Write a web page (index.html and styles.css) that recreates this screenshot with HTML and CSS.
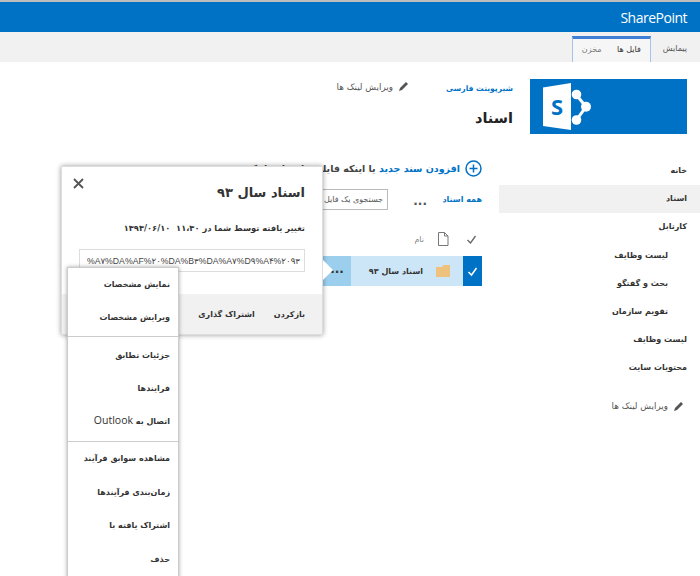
FILE: index.html
```html
<!DOCTYPE html>
<html lang="fa" dir="rtl">
<head>
<meta charset="utf-8">
<title>اسناد</title>
<link rel="stylesheet" href="styles.css">
</head>
<body>
<div class="suite"><span class="brand" dir="ltr">SharePoint</span></div>
<div class="ribbon">
  <span class="rib-link">پیمایش</span>
  <div class="rib-tab"><span class="rib-active">فایل ها</span><span class="rib-link">مخزن</span></div>
</div>
<header class="head">
  <svg class="logo" width="157" height="55" viewBox="0 0 157 55">
    <rect width="157" height="55" fill="#0072c6"/>
    <path d="M13 8.500 41 4V51L13 47Z" fill="#fff"/>
    <text x="21" y="36" class="logo-s">S</text>
    <path d="M46.500 16 56 27.700 46.500 41" fill="none" stroke="#fff" stroke-width="3"/>
    <circle cx="46.500" cy="15.500" r="4.800" fill="#fff"/>
    <circle cx="56" cy="27.700" r="5" fill="#fff"/>
    <circle cx="46.500" cy="41" r="4.800" fill="#fff"/>
  </svg>
  <div class="titles">
    <a class="site">شیرپوینت فارسی</a>
    <h1 class="title">اسناد</h1>
  </div>
  <div class="edit head-edit">
    <svg class="pencil" width="11" height="11" viewBox="0 0 11 11"><path d="M8 1l2 2-6 6-3 1 1-3z" fill="#555"/></svg>
    <span>ویرایش لینک ها</span>
  </div>
</header>
<div class="main">
  <aside class="side">
    <nav class="nav">
      <a class="nav-item">خانه</a>
      <a class="nav-item current">اسناد</a>
      <a class="nav-item">کارتابل</a>
      <a class="nav-item sub">لیست وظایف</a>
      <a class="nav-item sub">بحث و گفتگو</a>
      <a class="nav-item sub">تقویم سازمان</a>
      <a class="nav-item">لیست وظایف</a>
      <a class="nav-item">محتویات سایت</a>
    </nav>
    <div class="edit side-edit">
      <svg class="pencil" width="11" height="11" viewBox="0 0 11 11"><path d="M8 1l2 2-6 6-3 1 1-3z" fill="#555"/></svg>
      <span>ویرایش لینک ها</span>
    </div>
  </aside>
  <section class="content">
    <div class="add">
      <svg width="17" height="17" viewBox="0 0 17 17"><circle cx="8.500" cy="8.500" r="7.500" fill="none" stroke="#0072c6" stroke-width="1.500"/><path d="M8.500 4.500v8M4.500 8.500h8" stroke="#0072c6" stroke-width="1.500"/></svg>
      <span class="add-text"><b class="blue">افزودن سند جدید</b> یا اینکه فایلی را به اینجا بکشید</span>
    </div>
    <div class="views">
      <a class="view">همه اسناد</a>
      <span class="more">...</span>
      <span class="search">جستجوی یک فایل</span>
    </div>
    <div class="cols">
      <svg class="col-check" width="11" height="11" viewBox="0 0 11 11"><path d="M1.500 6l3 3 5-7" fill="none" stroke="#666" stroke-width="1.300"/></svg>
      <svg class="col-doc" width="12" height="14" viewBox="0 0 12 14"><path d="M1.500 .5h6l3.500 3.500v9.500h-9.500zM7.500 .5v3.500h3.500" fill="none" stroke="#777"/></svg>
      <span class="col-name">نام</span>
    </div>
    <div class="row">
      <span class="row-check"><svg width="11" height="11" viewBox="0 0 11 11"><path d="M1.500 6l3 3 5-7" fill="none" stroke="#fff" stroke-width="1.500"/></svg></span>
      <svg class="folder" width="14" height="12" viewBox="0 0 14 12"><path d="M0 2h6l1-2h7v12H0z" fill="#eec27d"/></svg>
      <span class="row-name">اسناد سال ۹۳</span>
      <span class="row-more">...</span>
    </div>
  </section>
</div>

<div class="callout">
  <button class="close" aria-label="بستن"><svg width="11" height="11" viewBox="0 0 11 11"><path d="M1 1l9 9M10 1l-9 9" stroke="#555" stroke-width="1.800"/></svg></button>
  <div class="callout-body">
    <h2 class="callout-title">اسناد سال ۹۳</h2>
    <p class="callout-meta">تغییر یافته توسط شما در ۱۱،۳۰ &nbsp;۱۳۹۳/۰۶/۱۰</p>
    <div class="url" dir="ltr">%A۷%DA%AF%۲۰%DA%B۳%DA%A۷%D۹%A۴%۲۰۹۳</div>
  </div>
  <div class="callout-foot"><a>بازکردن</a><a>اشتراک گذاری</a></div>
  <span class="beak"></span>
</div>

<div class="menu">
  <div class="menu-group first">
    <a>نمایش مشخصات</a>
    <a>ویرایش مشخصات</a>
  </div>
  <div class="menu-group second">
    <a>جزئیات تطابق</a>
    <a>فرایندها</a>
    <a>اتصال به <span class="latin">Outlook</span></a>
  </div>
  <div class="menu-group third">
    <a>مشاهده سوابق فرآیند</a>
    <a>زمان‌بندی فرآیندها</a>
    <a>اشتراک یافته با</a>
    <a>حذف</a>
  </div>
</div>
</body>
</html>
```
FILE: styles.css
```css
* { box-sizing: border-box; }
html, body { margin: 0; height: 576px; overflow: hidden; }
body {
  background: #fff;
  color: #333;
  font-family: "DejaVu Sans", sans-serif;
  font-size: 8px;
  position: relative;
  border-top: 2px solid #bdbdbd;
}
a { display: block; }

.suite {
  height: 30px;
  background: #0072c6;
  display: flex;
  align-items: center;
  padding-right: 13px;
}
.brand {
  color: #fff;
  font: 14px "Open Sans", sans-serif;
  letter-spacing: -.5px;
}

.ribbon {
  height: 30px;
  background: #f1f1f1;
  display: flex;
  align-items: flex-end;
  padding-right: 13px;
  gap: 12px;
  color: #555;
}
.rib-link { line-height: 26px; }
.rib-tab {
  width: 79px;
  height: 26px;
  display: flex;
  justify-content: space-between;
  padding: 0 9px;
  background: #f6f6f6;
  border: 1px solid #a5c3ea;
  border-top: 3px solid #3f7fd6;
  border-bottom: 0;
  line-height: 21px;
}
.rib-tab .rib-link { line-height: 21px; color: #777; }
.rib-active { color: #333; }

.head {
  height: 95px;
  display: flex;
  padding: 17px 13px 0 0;
}
.logo { display: block; flex: none; }
.logo-s { font: bold 22px "Open Sans", sans-serif; fill: #0072c6; direction: ltr; }
.titles { padding-top: 3px; width: 66px; margin: 0 17px 0 38px; flex: none; }
.site { color: #0072c6; font-weight: bold; font-size: 7.600px; line-height: 14px; white-space: nowrap; }
.title { margin: 10px 0 0; font-size: 14.500px; line-height: 24px; font-weight: bold; color: #222; }
.head-edit { align-self: flex-start; margin-top: 2px; white-space: nowrap; }

.edit {
  display: flex;
  align-items: center;
  gap: 5px;
  font-size: 8.800px;
  color: #555;
}

.main { display: flex; }

.side { width: 201px; flex: none; }
.nav-item {
  height: 28.200px;
  line-height: 28px;
  padding-right: 13px;
  font-weight: bold;
  color: #333;
}
.nav-item.sub { padding-right: 32px; }
.nav-item.current { background: #f1f1f1; }
.side-edit { margin-top: 18px; padding-right: 16px; }

.content { flex: 1; min-width: 0; padding: 3px 17px 0 0; }

.add {
  display: flex;
  align-items: center;
  gap: 5px;
  height: 17px;
  font-size: 9.500px;
  font-weight: bold;
  white-space: nowrap;
  color: #444;
}
.blue { color: #0072c6; }

.views {
  margin-top: 12px;
  height: 21px;
  display: flex;
  align-items: center;
}
.view { color: #0072c6; font-weight: bold; width: 53px; white-space: nowrap; }
.more { width: 41px; font-weight: bold; color: #555; font-size: 12px; line-height: 12px; padding: 3px 2px 0 0; text-align: right; }
.search {
  width: 160px;
  height: 21px;
  line-height: 19px;
  border: 1px solid #bbb;
  padding-right: 4px;
  color: #555;
}

.cols {
  margin-top: 18px;
  height: 28px;
  padding: 0 5px 6px 0;
  display: flex;
  align-items: center;
  color: #888;
}
.col-doc { margin-right: 17px; }
.col-name { margin-right: 13px; }

.row {
  height: 30px;
  width: 159px;
  background: #cde6f7;
  display: flex;
  align-items: center;
  font-weight: bold;
  color: #333;
}
.row-check {
  width: 19px;
  height: 30px;
  background: #0072c6;
  display: flex;
  align-items: center;
  justify-content: center;
}
.folder { margin-right: 13px; }
.row-name { margin-right: 13px; white-space: nowrap; flex: 1; }
.row-more {
  width: 28px;
  height: 30px;
  line-height: 26px;
  text-align: center;
  background: #9ccfee;
  font-size: 12px;
}

.callout {
  position: absolute;
  left: 61px;
  top: 164px;
  width: 262px;
  height: 169px;
  background: #fff;
  border: 1px solid #ddd;
  box-shadow: 0 0 5px rgba(0,0,0,.4);
  display: flex;
  flex-direction: column;
}
.close {
  position: absolute;
  left: 11px;
  top: 11px;
  padding: 0;
  border: 0;
  background: none;
  line-height: 0;
}
.callout-body { flex: 1; padding: 16px 17px 0; }
.callout-title { margin: 0; font-size: 13px; line-height: 20px; font-weight: bold; color: #333; }
.callout-meta { margin: 18px 0 0; font-size: 8.300px; line-height: 14px; font-weight: bold; color: #333; white-space: nowrap; }
.url {
  margin-top: 14px;
  height: 23px;
  border: 1px solid #ddd;
  padding-right: 4px;
  font: 8.700px/22px "Liberation Sans", "DejaVu Sans", sans-serif;
  text-align: right;
  white-space: nowrap;
  color: #444;
}
.callout-foot {
  height: 40px;
  background: #f1f1f1;
  display: flex;
  align-items: center;
  gap: 19px;
  padding-right: 17px;
  font-weight: bold;
  color: #333;
}
.beak {
  position: absolute;
  right: -11px;
  top: 93px;
  width: 0;
  height: 0;
  border-style: solid;
  border-width: 10px 0 10px 10px;
  border-color: transparent transparent transparent #fff;
}

.menu {
  position: absolute;
  left: 67px;
  top: 265px;
  width: 112px;
  height: 320px;
  background: #fff;
  border: 1px solid #ccc;
  box-shadow: 0 0 4px rgba(0,0,0,.35);
  font-weight: bold;
  color: #333;
}
.menu-group + .menu-group { border-top: 1px solid #ccc; }
.first { padding-bottom: 2px; }
.second { padding: 2px 0 3px; }
.menu a { height: 33px; line-height: 33px; padding-right: 8px; white-space: nowrap; }
.third a { height: 33.700px; }
.latin { font: 10.500px "Open Sans", sans-serif; }
```
